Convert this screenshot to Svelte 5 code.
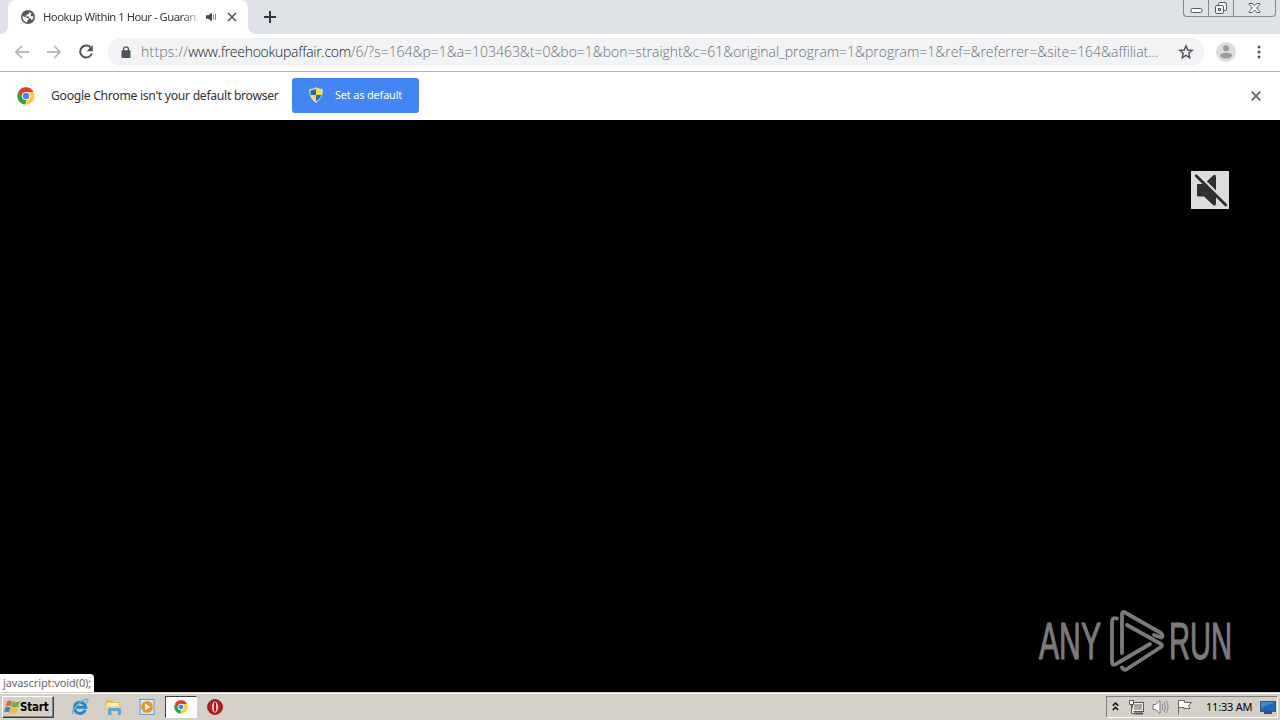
<script>
	const tabTitle = 'Hookup Within 1 Hour - Guarant'
	const url = {
		scheme: 'https://',
		host: 'www.freehookupaffair.com',
		path: '/6/?s=164&p=1&a=103463&t=0&bo=1&bon=straight&c=61&original_program=1&program=1&ref=&referrer=&site=164&affiliat...'
	}
	const clock = '11:33 AM'
</script>

{#snippet chromeIcon(size)}
	<svg width={size} height={size} viewBox="0 0 18 18">
		<circle cx="9" cy="9" r="8.6" fill="#fbc94a" />
		<path d="M1.5 4.7 A8.6 8.6 0 0 1 16.6 5 H9 L5.6 10.9 Z" fill="#df3b2f" />
		<path d="M1.5 4.7 L5.4 11 L9 13 L8.2 17.6 A8.6 8.6 0 0 1 1.5 4.7 Z" fill="#2ba24c" />
		<circle cx="9" cy="9" r="4.1" fill="#fff" />
		<circle cx="9" cy="9" r="3.2" fill="#4b86ea" />
	</svg>
{/snippet}

<div class="screen">
	<header class="tabstrip">
		<div class="tab-edge left"></div>
		<div class="tab">
			<svg class="globe" width="14" height="14" viewBox="0 0 14 14">
				<circle cx="7" cy="7" r="7" fill="#54585d" />
				<path d="M1.5 6 L5 7.4 L7.6 8.2 V9.6 L6.3 10.6 V12.6 A5.7 5.7 0 0 1 1.5 6 Z M6.6 1.6 L8.6 1.8 V3 L7 4.2 H5.8 V5.6 H4.6 V6.6 H8.2 V8.6 H9.8 L10.8 10.6 A5.6 5.6 0 0 0 12.4 6 L10.6 6.4 L9.5 5 L10.6 3" fill="#fff" />
			</svg>
			<span class="tab-title">{tabTitle}</span>
			<svg class="audio" width="12" height="10" viewBox="0 0 12 10">
				<path d="M0 3.3 H2.5 L6 .5 V9.5 L2.5 6.7 H0 Z" fill="#45494d" />
				<path d="M7.5 2.5 V7.5 M9.5 2 V8" stroke="#85898d" stroke-width="1" />
			</svg>
			<svg class="tab-close" width="10" height="10" viewBox="0 0 10 10">
				<path d="M1 1 L9 9 M9 1 L1 9" stroke="#505458" stroke-width="1.6" />
			</svg>
		</div>
		<div class="tab-edge right"></div>
		<svg class="new-tab" width="12" height="12" viewBox="0 0 12 12">
			<path d="M6 0 V12 M0 6 H12" stroke="#34383d" stroke-width="2" />
		</svg>
		<div class="window-buttons">
			<span class="wb">
				<svg width="13" height="16" viewBox="0 0 13 16"><rect x="1" y="8.5" width="11" height="4" rx="1.5" fill="#fff" stroke="#555960" /></svg>
			</span>
			<span class="wb">
				<svg width="14" height="16" viewBox="0 0 14 16">
					<rect x="4.5" y="2.5" width="8" height="8" rx="1.5" fill="#fff" stroke="#555960" />
					<rect x="1.5" y="5.5" width="8" height="8" rx="1.5" fill="#fff" stroke="#555960" />
					<rect x="4.5" y="8.5" width="2" height="2" fill="none" stroke="#555960" />
				</svg>
			</span>
			<span class="wb wide">
				<svg width="13" height="16" viewBox="0 0 13 16">
					<path d="M1.2 3.5 H4.2 L6.5 5.8 L8.8 3.5 H11.8 V4.5 L8.5 8 L11.8 11.5 V12.5 H8.8 L6.5 10.2 L4.2 12.5 H1.2 V11.5 L4.5 8 L1.2 4.5 Z" fill="#fff" stroke="#555960" />
				</svg>
			</span>
		</div>
	</header>

	<nav class="toolbar">
		<svg class="arrow" width="16" height="16" viewBox="0 0 16 16">
			<path d="M15 8 H2 M8 1.8 L1.8 8 L8 14.2" fill="none" stroke="#b9babc" stroke-width="1.8" />
		</svg>
		<svg class="arrow" width="16" height="16" viewBox="0 0 16 16">
			<path d="M1 8 H14 M8 1.8 L14.2 8 L8 14.2" fill="none" stroke="#b9babc" stroke-width="1.8" />
		</svg>
		<svg class="reload" width="16" height="16" viewBox="0 0 16 16">
			<path d="M13 4 A6 6 0 1 0 13.8 9.5" fill="none" stroke="#505357" stroke-width="2" />
			<path d="M14.8 1 V7.2 H8.6 Z" fill="#505357" />
		</svg>
		<div class="omnibox">
			<svg class="lock" width="10" height="12" viewBox="0 0 10 12">
				<rect x=".5" y="4.3" width="9" height="7.7" rx="1" fill="#515559" />
				<path d="M2.6 5 V3 A2.4 2.2 0 0 1 7.4 3 V5" fill="none" stroke="#515559" stroke-width="1.3" />
			</svg>
			<div class="url"><span class="scheme">{url.scheme}</span><span class="host">{url.host}</span><span class="path">{url.path}</span></div>
			<svg class="star" width="16" height="16" viewBox="0 0 16 16">
				<path d="M8 1.9 L9.7 6 L14.2 6.4 L10.8 9.3 L11.8 13.7 L8 11.4 L4.2 13.7 L5.2 9.3 L1.8 6.4 L6.3 6 Z" fill="none" stroke="#53575b" stroke-width="1.5" />
			</svg>
		</div>
		<svg class="avatar" width="20" height="20" viewBox="0 0 20 20">
			<circle cx="10" cy="10" r="10" fill="#dcdddd" />
			<circle cx="10" cy="6.2" r="3" fill="#989a9c" />
			<ellipse cx="10" cy="13.6" rx="6" ry="2.9" fill="#989a9c" />
		</svg>
		<svg class="dots" width="4" height="14" viewBox="0 0 4 14">
			<circle cx="2" cy="2" r="1.5" fill="#53575b" />
			<circle cx="2" cy="7" r="1.5" fill="#53575b" />
			<circle cx="2" cy="12" r="1.5" fill="#53575b" />
		</svg>
	</nav>

	<div class="infobar">
		{@render chromeIcon(18)}
		<span class="info-text">Google Chrome isn't your default browser</span>
		<button class="set-default">
			<svg width="14" height="16" viewBox="0 0 14 16">
				<path d="M7 .8 Q10 2.6 13.2 2.5 Q13.8 11 7 15.3 Q.2 11 .8 2.5 Q4 2.6 7 .8 Z" fill="#f8d84a" stroke="#e6e3c2" />
				<path d="M7 1.8 V8 H1.6 Q1.2 5 1.6 3.5 Q4.5 3.4 7 1.8 Z M7 8 H12.4 Q11.4 12 7 14.3 Z" fill="#286da9" />
			</svg>
			<span>Set as default</span>
		</button>
		<svg class="info-close" width="10" height="10" viewBox="0 0 10 10">
			<path d="M.7 .7 L9.3 9.3 M9.3 .7 L.7 9.3" stroke="#66696c" stroke-width="1.9" />
		</svg>
	</div>

	<main class="page">
		<div class="mute">
			<svg width="38" height="38" viewBox="0 0 38 38">
				<path d="M6 14 Q6 13 7 13 H13 L22 4.5 Q25 2.5 25 6 V32 Q25 36 22 34 L13 25.5 H7 Q6 25.5 6 24 Z" fill="#303030" />
				<path d="M6.5 3 L36 32.5" stroke="#ddd" stroke-width="3" />
				<path d="M5.2 4.7 L34.8 34" stroke="#303030" stroke-width="2.8" stroke-linecap="round" />
			</svg>
		</div>
		<svg class="anyrun" width="220" height="64" viewBox="0 0 220 64">
			<g fill="#7b7b7b" stroke="#7b7b7b" stroke-width="1.2" font-family="'Liberation Sans Narrow', 'Liberation Sans', sans-serif" font-size="51">
				<text x="3" y="50" textLength="62" lengthAdjust="spacingAndGlyphs">ANY</text>
				<text x="133" y="50" textLength="63" lengthAdjust="spacingAndGlyphs">RUN</text>
			</g>
			<g fill="none" stroke="#7b7b7b" stroke-width="3.8" stroke-linejoin="round" stroke-linecap="round">
				<path d="M86 44 V5 Q86 2 89 3.5 L125 24 Q128 27 125 28.5 L118 26" />
				<path d="M81 9.5 Q76 8 76 13 V53 Q76 57 80 55 L114 35" />
				<path d="M91 16 L125 35 Q127 36.5 125 38 L91 60 Q88 62 86 58.5" />
			</g>
		</svg>
		<div class="status">javascript:void(0);</div>
	</main>

	<footer class="taskbar">
		<div class="start">
			<svg width="16" height="16" viewBox="0 0 16 16">
				<path d="M3 2.4 Q5.5 .7 8 2.3 L6.6 7.5 Q4 6.2 1.6 7.6 Z" fill="#e16a34" />
				<path d="M8.4 2.6 Q12 4.4 16 2 L14.3 7.9 Q10.5 9 7.2 7.6 Z" fill="#74ae4c" />
				<path d="M1.3 8.3 Q4 7 6.3 8.3 L5 13.6 Q2.5 12 0 13.6 Z" fill="#4b83bd" />
				<path d="M7.1 8.5 Q10.3 10 14 8.6 L12.4 14 Q9 15.6 5.7 14 Z" fill="#f1bd3c" />
			</svg>
			<span>Start</span>
		</div>
		<div class="quick">
			<svg width="18" height="18" viewBox="0 0 18 18">
				<path d="M14.3 11.8 A5.6 5.6 0 1 1 14.6 9.2 H5" fill="none" stroke="#2688cb" stroke-width="3" />
				<path d="M2 16.2 C-1 13 11 .8 16.2 1.4 Q17.8 2.3 15.5 5.4" fill="none" stroke="#65b3df" stroke-width="1.5" />
			</svg>
			<svg width="18" height="18" viewBox="0 0 18 18">
				<path d="M1 2 H7 L8 4 H15 V15 H1 Z" fill="#ddc05c" />
				<path d="M2 5 H14 V8 H2 Z" fill="#fff4b5" />
				<path d="M1 8 H16 V15 H1 Z" fill="#ecd28a" />
				<path d="M3 17 V11.5 Q3 10 5 10 H14 Q16 10 16 11.5 V17 H13 V13 H6.5 V17 Z" fill="#5ba5d0" />
			</svg>
			<svg width="18" height="18" viewBox="0 0 18 18">
				<rect x="1" y="1.5" width="14" height="15" fill="#d6e8f4" stroke="#609cc9" />
				<circle cx="8" cy="9" r="5.9" fill="#f29222" />
				<path d="M6.2 5.7 L11.5 9 L6.2 12.3 Z" fill="#fff" />
			</svg>
		</div>
		<div class="running">{@render chromeIcon(14)}</div>
		<svg class="opera" width="16" height="16" viewBox="0 0 16 16">
			<circle cx="8" cy="8" r="7.8" fill="#b91d22" />
			<circle cx="8" cy="8" r="7.1" fill="none" stroke="#8f161a" />
			<ellipse cx="8" cy="8" rx="2.8" ry="5.6" fill="#fff" />
			<ellipse cx="8" cy="8" rx="1.3" ry="5" fill="#a9181d" />
		</svg>
		<div class="tray">
			<svg width="7" height="10" viewBox="0 0 7 10">
				<path d="M.8 3.6 L3.5 1 L6.2 3.6 M.8 8 L3.5 5.4 L6.2 8" fill="none" stroke="#111" stroke-width="1.5" />
			</svg>
			<svg class="net" width="17" height="16" viewBox="0 0 17 16">
				<rect x="4.5" y="3.5" width="11" height="9" fill="#f2f2ee" stroke="#55585a" />
				<rect x="6" y="5" width="8" height="6" fill="#a9aaa8" />
				<path d="M6 14.5 H15" stroke="#55585a" stroke-width="2" />
				<path d="M1.5 1.5 H5.5 V5.5 H1.5 Z M3.5 5.5 V14.5 H6" fill="#fff" stroke="#55585a" />
			</svg>
			<svg class="vol" width="17" height="16" viewBox="0 0 17 16">
				<path d="M1 5.5 H3.5 L8 1.5 V14.5 L3.5 10.5 H1 Z" fill="#fff" stroke="#777" />
				<path d="M10 5 Q12 8 10 11 M12 3 Q15 8 12 13 M14 1.5 Q18 8 14 14.5" fill="none" stroke="#888" />
			</svg>
			<svg class="flag" width="17" height="16" viewBox="0 0 17 16">
				<path d="M2.5 1 V15.5 M2.5 1.5 H8.5 V3.5 H15.5 L12.5 6.5 L14 9.5 H8 V8.5 H2.5 Z" fill="#fff" stroke="#66696a" />
			</svg>
			<span class="clock">{clock}</span>
			<svg class="desktop" width="16" height="14" viewBox="0 0 16 14">
				<rect x=".5" y="1.5" width="15" height="10" fill="#1f66b7" stroke="#345881" />
				<path d="M1 2 H15 L1 8 Z" fill="#3d8bd6" />
				<path d="M4 13 H12" stroke="#344f70" stroke-width="2" />
			</svg>
		</div>
	</footer>
</div>

<style>
	:global(body) {
		overflow: hidden;
	}

	.screen {
		width: 1280px;
		height: 720px;
		display: flex;
		flex-direction: column;
		background: #000;
		font-family: 'DejaVu Sans Condensed', 'DejaVu Sans', sans-serif;
	}

	svg {
		display: block;
		flex: none;
	}

	span {
		white-space: nowrap;
	}

	.tabstrip {
		height: 34px;
		flex: none;
		display: flex;
		background: #dee1e6;
	}

	.tab-edge {
		width: 8px;
		background: #fff;
	}

	.tab-edge::before {
		content: '';
		display: block;
		height: 34px;
		background: #dee1e6;
	}

	.left::before {
		border-bottom-right-radius: 8px;
	}

	.right::before {
		border-bottom-left-radius: 8px;
	}

	.tab {
		width: 240px;
		box-sizing: border-box;
		padding-left: 13px;
		display: flex;
		align-items: center;
		background: #fff;
		border-radius: 8px 8px 0 0;
	}

	.tab-title {
		width: 154px;
		margin: -1px 0 0 8px;
		font-family: 'Noto Sans', sans-serif;
		font-size: 11.3px;
		letter-spacing: -0.5px;
		color: #34373b;
		mask-image: linear-gradient(to right, #000 138px, transparent 160px);
	}

	.audio {
		margin-left: 9px;
	}

	.tab-close {
		margin-left: 9px;
	}

	.new-tab {
		margin: 11px 0 0 8px;
	}

	.window-buttons {
		margin: 0 4px 0 auto;
		width: 93px;
		height: 17px;
		box-sizing: border-box;
		display: flex;
		border: 1px solid #84888f;
		border-top: 0;
		border-radius: 0 0 4px 4px;
	}

	.wb {
		width: 24px;
		display: flex;
		justify-content: center;
		border-right: 1px solid #84888f;
	}

	.wide {
		flex: 1;
		border-right: 0;
	}

	.toolbar {
		height: 38px;
		flex: none;
		box-sizing: border-box;
		padding: 0 0 1px 14px;
		display: flex;
		align-items: center;
		background: #fff;
		border-bottom: 1px solid #b3b3b3;
	}

	.arrow {
		margin-right: 16px;
	}

	.omnibox {
		width: 1096px;
		height: 28px;
		margin-left: 14px;
		box-sizing: border-box;
		padding: 0 10px 0 13px;
		display: flex;
		align-items: center;
		background: #f1f3f4;
		border-radius: 14px;
	}

	.url {
		width: 1022px;
		margin: -1px 0 0 10px;
		display: flex;
		font-family: 'Open Sans', sans-serif;
		font-weight: 300;
		font-size: 14px;
		color: #6d7176;
	}

	.scheme {
		letter-spacing: 0.22px;
	}

	.host {
		color: #202124;
		letter-spacing: -0.27px;
	}

	.path {
		letter-spacing: -0.025px;
	}

	.star {
		margin-left: auto;
	}

	.avatar {
		margin-left: 12px;
	}

	.dots {
		margin-left: 21px;
	}

	.infobar {
		height: 48px;
		flex: none;
		box-sizing: border-box;
		padding: 0 19px 0 17px;
		display: flex;
		align-items: center;
		background: #fff;
	}

	.info-text {
		width: 229px;
		margin: -2px 0 0 16px;
		font-family: 'Noto Sans', sans-serif;
		font-size: 12.2px;
		letter-spacing: -0.3px;
		color: #303236;
	}

	.set-default {
		width: 127px;
		height: 35px;
		margin: -1px 0 0 12px;
		padding: 0 0 1px 17px;
		display: flex;
		align-items: center;
		gap: 12px;
		border: 0;
		border-radius: 3px;
		background: #4285f4;
		color: #fff;
		font-family: 'Noto Sans', sans-serif;
		font-size: 11px;
		letter-spacing: -0.2px;
	}

	.set-default span {
		margin-top: -2px;
	}

	.info-close {
		margin-left: auto;
	}

	.page {
		position: relative;
		height: 572px;
		flex: none;
		background: #000;
	}

	.mute {
		position: absolute;
		top: 51px;
		right: 51px;
		background: #ddd;
	}

	.anyrun {
		position: absolute;
		right: 24px;
		bottom: 19px;
	}

	.status {
		position: absolute;
		left: 0;
		bottom: 0;
		width: 94px;
		height: 18px;
		box-sizing: border-box;
		padding-left: 3px;
		line-height: 18px;
		background: #fff;
		border-top-right-radius: 4px;
		font-family: 'Noto Sans', sans-serif;
		font-size: 11px;
		letter-spacing: -0.1px;
		color: #66696c;
	}

	.taskbar {
		height: 28px;
		flex: none;
		box-sizing: border-box;
		border-top: 1px solid #d4d0c8;
		box-shadow: inset 0 1px #fff;
		padding: 2px 2px 1px;
		display: flex;
		align-items: center;
		background: #d4d0c8;
	}

	.start {
		width: 52px;
		height: 22px;
		box-sizing: border-box;
		padding-left: 1px;
		display: flex;
		align-items: center;
		border: 1px solid;
		border-color: #fff #404040 #404040 #fff;
		box-shadow: inset -1px -1px #808080;
		font-size: 11.5px;
		font-weight: bold;
		letter-spacing: -0.2px;
		color: #000;
	}

	.quick {
		margin-left: 17px;
		display: flex;
		gap: 16px;
	}

	.running {
		width: 32px;
		height: 22px;
		margin-left: 8px;
		box-sizing: border-box;
		display: flex;
		align-items: center;
		justify-content: center;
		background: #fff;
		border: 1px solid;
		border-color: #404040 #fff #fff #404040;
	}

	.opera {
		margin-left: 10px;
	}

	.tray {
		width: 172px;
		height: 22px;
		margin-left: auto;
		box-sizing: border-box;
		padding-left: 5px;
		display: flex;
		align-items: center;
		border: 1px solid;
		border-color: #808080 #fff #fff #808080;
	}

	.net {
		margin-left: 9px;
	}

	.vol,
	.flag {
		margin-left: 7px;
	}

	.clock {
		width: 47px;
		margin: -1px 0 0 13px;
		font-family: 'Noto Sans', sans-serif;
		font-size: 11px;
		letter-spacing: -0.2px;
		color: #000;
	}

	.desktop {
		margin-left: 7px;
	}
</style>
